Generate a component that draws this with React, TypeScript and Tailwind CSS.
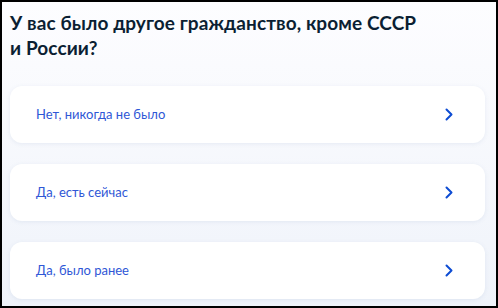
import React from 'react';

const options = ['Нет, никогда не было', 'Да, есть сейчас', 'Да, было ранее'];

function Chevron() {
  return (
    <svg width="8" height="13" viewBox="0 0 8 13" fill="none">
      <path d="M1.5 1.5L6.5 6.5L1.5 11.5" stroke="#0d4cd3" strokeWidth="2" strokeLinecap="round" strokeLinejoin="round" />
    </svg>
  );
}

export default function App() {
  return (
    <div className="w-[498px] h-[308px] border-2 border-black bg-gradient-to-b from-[#fdfdff] to-[#eff3fa] font-['Lato','Noto_Sans',sans-serif] overflow-hidden">
      <div className="px-[8px] pt-[8px]">
        <h1 className="text-[19px] leading-[25px] font-bold text-[#0b1f33] tracking-[0.1px]">
          У вас было другое гражданство, кроме СССР
          <br />
          и России?
        </h1>
        <div className="mt-[26px] flex flex-col gap-[21px] pr-[3px]">
          {options.map((o) => (
            <button
              key={o}
              className="h-[57px] w-full flex items-center justify-between pl-[26px] pr-[32px] bg-white rounded-[12px] shadow-[0_1px_4px_rgba(80,110,160,0.10)] text-left"
            >
              <span className="text-[13px] text-[#2f57d6]">{o}</span>
              <Chevron />
            </button>
          ))}
        </div>
      </div>
    </div>
  );
}
